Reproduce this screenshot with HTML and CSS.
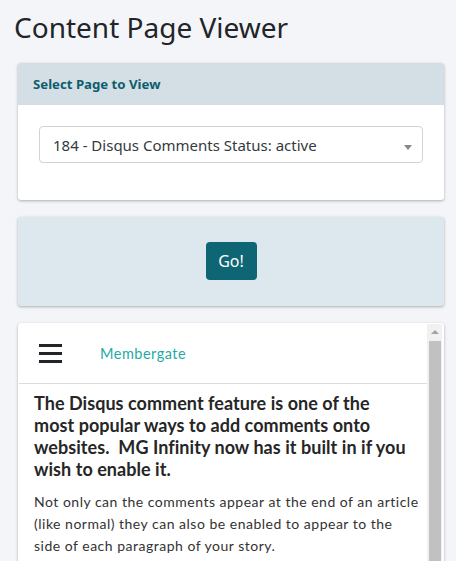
FILE: index.html
```html
<!DOCTYPE html>
<html lang="en">
<head>
    <meta charset="UTF-8">
    <meta name="viewport" content="width=device-width, initial-scale=1.0">
    <title>Content Page Viewer</title>
    <link rel="stylesheet" href="styles.css">
</head>
<body>
    <h1 class="page-title">Content Page Viewer</h1>

    <div class="card">
        <div class="card-header">Select Page to View</div>
        <div class="card-body">
            <div class="select-box">
                <span>184 - Disqus Comments Status: active</span>
                <span class="caret"></span>
            </div>
        </div>
    </div>

    <div class="card card-action">
        <button type="button" class="btn-go">Go!</button>
    </div>

    <div class="card card-preview">
        <div class="preview-frame">
            <div class="preview-page">
                <div class="preview-nav">
                    <span class="burger"><i></i><i></i><i></i></span>
                    <span class="brand">Membergate</span>
                </div>
                <!-- line breaks kept as in the rendered article -->
                <div class="preview-content">
                    <h2>The Disqus comment feature is one of the<br>most popular ways to add comments onto<br>websites.&nbsp; MG Infinity now has it built in if you<br>wish to enable it.</h2>
                    <p>Not only can the comments appear at the end of an article<br>(like normal) they can also be enabled to appear to the<br>side of each paragraph of your story.</p>
                </div>
            </div>
            <!-- fake scrollbar, the iframe one doesn't show in screenshots -->
            <div class="scrollbar">
                <span class="scroll-up"></span>
                <span class="scroll-thumb"></span>
            </div>
        </div>
    </div>
</body>
</html>
```

FILE: styles.css
```css
body {
    margin: 0;
    padding: 8px 12px 0 14px;
    background-color: #f4f5f9;
    font-family: "Noto Sans", "Open Sans", sans-serif;
    color: #212529;
    overflow: hidden;
}

.page-title {
    margin: 0 0 17px 0;
    font-size: 28px;
    font-weight: 400;
    line-height: 38px;
}

.card {
    margin: 0 0 17px 4px;
    background-color: #fff;
    border-radius: 3px;
    box-shadow: 0 1px 3px rgba(0, 0, 0, 0.3);
}

.card-header {
    background-color: #d3dfe5;
    color: #0e5d6d;
    font-weight: 700;
    font-size: 13.2px;
    line-height: 17px;
    padding: 13px 15px 12px 15px;
    border-radius: 3px 3px 0 0;
}

.card-body {
    padding: 21px 21px 37px 21px;
}

.select-box {
    display: flex;
    align-items: center;
    justify-content: space-between;
    height: 35px;
    border: 1px solid #ced4da;
    border-radius: 4px;
    padding: 0 10px 0 13px;
    font-size: 15px;
    color: #343a40;
}

.caret {
    width: 0;
    height: 0;
    margin-top: 5px;
    border-left: 4px solid transparent;
    border-right: 4px solid transparent;
    border-top: 5px solid #888;
}

.card-action {
    background-color: #dde7ee;
    display: flex;
    justify-content: center;
    padding: 25px 0 26px 0;
}

.btn-go {
    background-color: #0e6574;
    color: #fff;
    border: none;
    border-radius: 4px;
    font-family: "Noto Sans", "Open Sans", sans-serif;
    font-size: 16px;
    width: 51px;
    height: 38px;
    cursor: pointer;
}

.card-preview {
    margin-bottom: 0;
    padding: 1px 2px 0 1px;
}

.preview-frame {
    display: flex;
    height: 260px;
    overflow: hidden;
    font-family: Lato, sans-serif;
}

.preview-page {
    flex: 1;
    min-width: 0;
}

.preview-nav {
    display: flex;
    align-items: center;
    height: 59px;
    border-bottom: 1px solid #dcdcdc;
    padding-left: 20px;
}

.burger {
    display: flex;
    flex-direction: column;
    gap: 5px;
    width: 23px;
    margin-right: 38px;
}

.burger i {
    display: block;
    height: 3px;
    background-color: #212529;
}

.brand {
    color: #26a9a5;
    font-size: 14.5px;
    letter-spacing: 0.5px;
}

.preview-content {
    padding: 8px 0 0 15px;
    white-space: nowrap;
}

.preview-content h2 {
    margin: 0 0 11px 0;
    font-size: 18px;
    font-weight: 700;
    line-height: 22px;
    letter-spacing: 0.05px;
    color: #262626;
}

.preview-content p {
    margin: 0 0 10px 0;
    font-size: 14px;
    line-height: 22px;
    letter-spacing: 0.5px;
    color: #333;
}

.scrollbar {
    display: flex;
    flex-direction: column;
    align-items: center;
    width: 15px;
    background-color: #f1f1f1;
}

.scroll-up {
    width: 0;
    height: 0;
    margin: 6px 0 7px 0;
    border-left: 4px solid transparent;
    border-right: 4px solid transparent;
    border-bottom: 4px solid #a3a3a3;
}

.scroll-thumb {
    width: 12px;
    flex: 1;
    background-color: #c1c1c1;
}
```
